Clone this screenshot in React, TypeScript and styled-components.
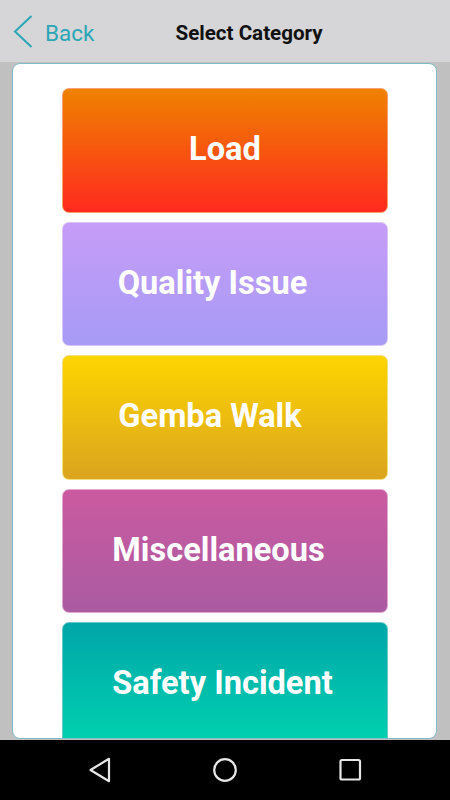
import React from "react";
import styled, { createGlobalStyle } from "styled-components";

const Global = createGlobalStyle`
  html, body { margin: 0; padding: 0; background: #c0c0c0; }
  body { font-family: Roboto, "Noto Sans", "Liberation Sans", sans-serif; }
  * { box-sizing: border-box; }
`;

const Screen = styled.div`
  width: 450px;
  height: 800px;
  display: flex;
  flex-direction: column;
  background: #c0c0c0;
  overflow: hidden;
`;

const Header = styled.header`
  height: 62px;
  flex: 0 0 62px;
  background: #d6d6d8;
  display: flex;
  align-items: center;
  padding: 3px 0 0 13px;
`;

const BackButton = styled.button`
  display: flex;
  align-items: center;
  gap: 12px;
  background: none;
  border: none;
  padding: 0;
  margin: 0;
  color: #2aa6b6;
  font-family: Roboto, "Liberation Sans", sans-serif;
  font-size: 22.5px;
  font-weight: 400;
  cursor: pointer;
`;

const Chevron = styled.svg`
  display: block;
  margin-top: -3px;
`;

const Title = styled.h1`
  margin: 0 0 0 81px;
  font-family: Roboto, "Liberation Sans", sans-serif;
  font-size: 20.6px;
  font-weight: 700;
  color: #111;
`;

const Main = styled.main`
  flex: 1;
  min-height: 0;
  display: flex;
  padding: 1px 13px 1px 12px;
`;

const Card = styled.section`
  flex: 1;
  background: #fff;
  border: 1px solid #7fbcc6;
  border-radius: 8px;
  overflow: hidden;
  display: flex;
  flex-direction: column;
  gap: 9px;
  padding: 24px 48px 0 49px;
`;

const CategoryButton = styled.button<{ $from: string; $to: string; $edge: string; $shift: number }>`
  flex: 0 0 124.5px;
  width: 100%;
  border: 1px solid ${(p) => p.$edge};
  border-radius: 7px;
  background: linear-gradient(to bottom, ${(p) => p.$from}, ${(p) => p.$to});
  color: #fff;
  font-family: Roboto, "Liberation Sans", sans-serif;
  font-size: 32.6px;
  font-weight: 700;
  display: flex;
  align-items: center;
  justify-content: center;
  padding: 0 ${(p) => Math.max(0, p.$shift)}px 2px ${(p) => Math.max(0, -p.$shift)}px;
  cursor: pointer;
`;

const NavBar = styled.nav`
  height: 60px;
  flex: 0 0 60px;
  background: #000;
  display: flex;
  align-items: center;
  justify-content: center;
  gap: 99px;
`;

const NavIcon = styled.svg`
  width: 26px;
  height: 26px;
  display: block;
`;

const categories = [
  { label: "Load", from: "#ef8200", to: "#ff2a1e", edge: "#f7a070", shift: 0 },
  { label: "Quality Issue", from: "#c69cf7", to: "#a69bf6", edge: "#d9c4fa", shift: 25 },
  { label: "Gemba Walk", from: "#fdd500", to: "#dba41f", edge: "#f3df80", shift: 30 },
  { label: "Miscellaneous", from: "#cb5aa0", to: "#aa5ba2", edge: "#dfa8cc", shift: 13 },
  { label: "Safety Incident", from: "#00a6a8", to: "#00d2b0", edge: "#66c8c8", shift: 5 },
];

export default function App() {
  return (
    <>
      <Global />
      <Screen>
        <Header>
          <BackButton>
            <Chevron width="20" height="33" viewBox="0 0 20 33">
              <path d="M18.5 1 L2 16.5 L18.5 32" fill="none" stroke="#2aa6b6" strokeWidth="2" />
            </Chevron>
            Back
          </BackButton>
          <Title>Select Category</Title>
        </Header>
        <Main>
          <Card>
            {categories.map((c) => (
              <CategoryButton key={c.label} $from={c.from} $to={c.to} $edge={c.edge} $shift={c.shift}>
                {c.label}
              </CategoryButton>
            ))}
          </Card>
        </Main>
        <NavBar>
          <NavIcon viewBox="0 0 26 26">
            <path d="M22 1.8 L22 24.2 L3.5 13 Z" fill="none" stroke="#e6e6e6" strokeWidth="2.2" strokeLinejoin="round" />
          </NavIcon>
          <NavIcon viewBox="0 0 26 26">
            <circle cx="13" cy="13" r="10.8" fill="none" stroke="#e6e6e6" strokeWidth="2.2" />
          </NavIcon>
          <NavIcon viewBox="0 0 26 26">
            <rect x="3.5" y="3" width="19.5" height="19.5" rx="1.5" fill="none" stroke="#e6e6e6" strokeWidth="2.2" />
          </NavIcon>
        </NavBar>
      </Screen>
    </>
  );
}
